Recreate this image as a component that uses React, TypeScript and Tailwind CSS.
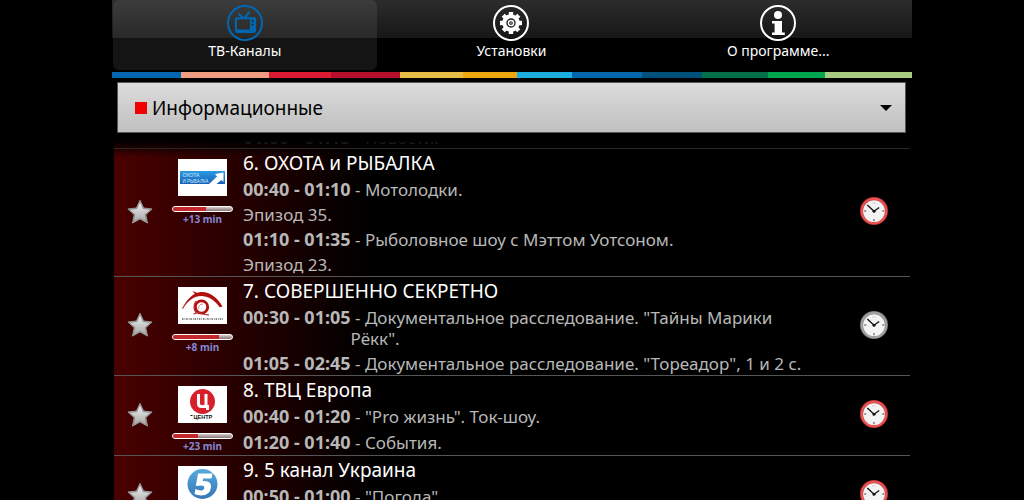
import type { ReactNode } from "react";

type Programme = { time?: string; text: string };
type Channel = {
  title: string;
  logo: ReactNode;
  progress: number;
  left: string;
  alarm: boolean;
  programmes: Programme[];
};

function TvIcon() {
  return (
    <svg viewBox="0 0 36 36" className="size-9" fill="none" stroke="#0068b3" aria-hidden="true">
      <circle cx="18" cy="18" r="17" strokeWidth="2" />
      <path d="M11.5 8.5 16 13M22.5 7 17.5 13" strokeWidth="2" />
      <rect x="8.9" y="13.3" width="19.2" height="13.6" rx="1.2" strokeWidth="2" />
      <path d="M23 13h5.500v14H23z" fill="#0068b3" stroke="none" />
      <path d="M10 25.2h11.500q1.500-.1 1.500-1.500" strokeWidth="1.4" />
      <circle cx="25.600" cy="16" r="1" fill="#202020" stroke="none" />
      <circle cx="25.600" cy="19.500" r="1" fill="#202020" stroke="none" />
    </svg>
  );
}

function GearIcon() {
  const teeth = [0, 45, 90, 135, 180, 225, 270, 315];
  return (
    <svg viewBox="0 0 36 36" className="size-9" fill="none" stroke="#fff" aria-hidden="true">
      <circle cx="18" cy="18" r="17" strokeWidth="2" />
      <circle cx="18" cy="18" r="6.700" strokeWidth="4" />
      {teeth.map((a) => (
        <path key={a} d="M15.800 10.500V7h4.400v3.500z" fill="#fff" stroke="none" transform={`rotate(${a} 18 18)`} />
      ))}
      <circle cx="18" cy="18" r="2.600" strokeWidth="1.500" />
      <circle cx="18" cy="18" r=".7" fill="#fff" stroke="none" />
    </svg>
  );
}

function InfoIcon() {
  return (
    <svg viewBox="0 0 36 36" className="size-9" fill="#fff" aria-hidden="true">
      <circle cx="18" cy="18" r="17" fill="none" stroke="#fff" strokeWidth="2" />
      <circle cx="18" cy="10" r="4" />
      <path d="M12 16h10v11.500h2.800V30H12v-2.500h2.600v-9H12z" />
    </svg>
  );
}

function Star() {
  return (
    <svg viewBox="0 0 26 26" className="size-[26px]" aria-hidden="true">
      <defs>
        <linearGradient id="starFill" x1="0" y1="0" x2="0" y2="1">
          <stop offset="0" stopColor="#f0f0f0" />
          <stop offset="1" stopColor="#a8a8a8" />
        </linearGradient>
      </defs>
      <path
        d="M13 1.300 16.600 9l8.500 1-6.300 5.700 1.700 8.400L13 20l-7.500 4.100 1.700-8.400L.9 10l8.500-1z"
        fill="#8c8c8c"
        stroke="#989898"
        strokeWidth="1"
        strokeLinejoin="round"
      />
      <path d="M13 3.500 15.900 10l7 .8-5.200 4.700 1.400 6.900L13 18.900l-6.100 3.500 1.400-6.900-5.200-4.700 7-.8z" fill="url(#starFill)" />
    </svg>
  );
}

function Clock({ active }: { active: boolean }) {
  return (
    <svg viewBox="0 0 28 28" className="size-7" aria-hidden="true">
      <circle cx="14" cy="14" r="14" fill={active ? "#b93434" : "#777"} />
      <circle cx="14" cy="14" r="13.200" fill={active ? "#ee5454" : "#a3a3a3"} />
      <circle cx="14" cy="14" r="11.300" fill={active ? "#b33" : "#777"} />
      <circle cx="14" cy="14.200" r="10.900" fill="#f3f3f3" />
      <path d="M14 22v2.200M4.200 14h2M22.300 14h2" stroke="#777" strokeWidth="1.400" />
      <path d="M12 6h4" stroke="#ccc" strokeWidth=".8" />
      <path d="M7.300 8 14 14.200l5.200-3.700" fill="none" stroke="#111" strokeWidth="1.400" />
      <circle cx="14" cy="14.200" r="1.500" fill="#111" />
    </svg>
  );
}

function HuntingLogo() {
  return (
    <svg viewBox="0 0 49 37" className="h-[37px] w-[49px] bg-white" role="img" aria-label="Охота и рыбалка">
      <defs>
        <linearGradient id="huntBlue" x1="0" y1="0" x2="0" y2="1">
          <stop offset="0" stopColor="#2a9be2" />
          <stop offset="1" stopColor="#1560b6" />
        </linearGradient>
      </defs>
      <rect x="2" y="12" width="45" height="13" fill="url(#huntBlue)" />
      <path d="m31 25 8-7.500-2-2.500 8.500-1.500V23l-2-2-5 4z" fill="#fff" />
      <text x="4.500" y="18" fontSize="5" fill="#d4eaff" fontFamily="Liberation Sans, sans-serif">ОХОТА</text>
      <text x="4.500" y="23.500" fontSize="4.500" fill="#d4eaff" fontFamily="Liberation Sans, sans-serif">И РЫБАЛКА</text>
    </svg>
  );
}

function SecretLogo() {
  return (
    <svg viewBox="0 0 49 37" className="h-[37px] w-[49px] bg-white" role="img" aria-label="Совершенно секретно">
      <path d="M4 21.500C9 12 15 6 22 5.200c9-1 17 5 22.500 14.300l-2.800.8C36 12.500 30 9 23 9 15 9.500 9.500 14 5 21.800z" fill="#b01010" />
      <path d="m14.500 4 5 2L24 5l-5 4.500z" fill="#b01010" />
      <circle cx="23.500" cy="20" r="6.200" fill="none" stroke="#b01010" strokeWidth="2.800" />
      <path d="M18 14q-4 6 0 12M15.500 27q5-2 8-.5t7.500 1.300" fill="none" stroke="#c03030" strokeWidth="1.200" />
      <path d="M20.500 22q0-5 4.500-5" fill="none" stroke="#d88" strokeWidth="1" />
      <path d="M4 32h41" stroke="#888" strokeWidth="1.800" strokeDasharray="1.500 1 .8 .9" />
    </svg>
  );
}

function CenterLogo() {
  return (
    <svg viewBox="0 0 49 37" className="h-[37px] w-[49px] bg-white" role="img" aria-label="ТВ Центр">
      <circle cx="24.500" cy="15.500" r="12.500" fill="#d8202c" />
      <path d="M20.500 8v9.500q0 3 3 3h5M28 8v12.500h1.500v3.500" fill="none" stroke="#fff" strokeWidth="3" />
      <text x="15.500" y="33.300" fontSize="5.500" fontWeight="bold" fill="#111" fontFamily="Liberation Sans, sans-serif">ЦЕНТР</text>
      <path d="M12.500 29.500h2" stroke="#111" />
    </svg>
  );
}

function FiveLogo() {
  return (
    <svg viewBox="0 0 49 37" className="h-[37px] w-[49px] bg-white" role="img" aria-label="5 канал">
      <defs>
        <linearGradient id="fiveBlue" x1="0" y1="0" x2="0" y2="1">
          <stop offset="0" stopColor="#58a8dc" />
          <stop offset="1" stopColor="#3478b8" />
        </linearGradient>
      </defs>
      <circle cx="24.500" cy="18" r="15" fill="url(#fiveBlue)" />
      <path d="M20 7.500h14.500l-1 5h-8.300l-.5 2.500q8.800-.8 8.300 6-.7 8.500-10 8.500-3.800 0-6.600-1.400l1.100-5q2.800 1.400 5.200 1.400 3.300 0 3.500-2.800.1-2.200-3.200-2.200-2.400 0-5.200.6z" fill="#fff" />
    </svg>
  );
}

const tabs = [
  { label: "ТВ-Каналы", icon: <TvIcon />, active: true },
  { label: "Установки", icon: <GearIcon />, active: false },
  { label: "О программе...", icon: <InfoIcon />, active: false },
];

const stripes = [
  "grow-[69] bg-[#0066b0]",
  "grow-[88] bg-[#f09c80]",
  "grow-[62] bg-[#da1b32]",
  "grow-[69] bg-[#b60f2e]",
  "grow-[63] bg-[#e8bd45]",
  "grow-[54] bg-[#eea70f]",
  "grow-[55] bg-[#1badde]",
  "grow-[70] bg-[#0066ae]",
  "grow-[60] bg-[#00507c]",
  "grow-[66] bg-[#00704b]",
  "grow-[57] bg-[#00a650]",
  "grow-[87] bg-[#a9cb80]",
];

const channels: Channel[] = [
  {
    title: "6. ОХОТА и РЫБАЛКА",
    logo: <HuntingLogo />,
    progress: 56,
    left: "+13 min",
    alarm: true,
    programmes: [
      { time: "00:40 - 01:10", text: "Мотолодки." },
      { text: "Эпизод 35." },
      { time: "01:10 - 01:35", text: "Рыболовное шоу с Мэттом Уотсоном." },
      { text: "Эпизод 23." },
    ],
  },
  {
    title: "7. СОВЕРШЕННО СЕКРЕТНО",
    logo: <SecretLogo />,
    progress: 78,
    left: "+8 min",
    alarm: false,
    programmes: [
      { time: "00:30 - 01:05", text: "Документальное расследование. \"Тайны Марики Рёкк\"." },
      { time: "01:05 - 02:45", text: "Документальное расследование. \"Тореадор\", 1 и 2 с." },
    ],
  },
  {
    title: "8. ТВЦ Европа",
    logo: <CenterLogo />,
    progress: 42,
    left: "+23 min",
    alarm: true,
    programmes: [
      { time: "00:40 - 01:20", text: "\"Pro жизнь\". Ток-шоу." },
      { time: "01:20 - 01:40", text: "События." },
    ],
  },
  {
    title: "9. 5 канал Украина",
    logo: <FiveLogo />,
    progress: 60,
    left: "+4 min",
    alarm: true,
    programmes: [
      { time: "00:50 - 01:00", text: "\"Погода\"." },
    ],
  },
];

function ProgrammeLine({ time, text }: Programme) {
  if (!time) return <p>{text}</p>;
  return (
    <p className="flex items-baseline">
      <b className="shrink-0 text-[18px] whitespace-nowrap">{time}</b>
      <span className="min-w-0 whitespace-pre-wrap">{` - ${text}`}</span>
    </p>
  );
}

function ChannelRow({ channel }: { channel: Channel }) {
  return (
    <li className="flex shrink-0 border-b border-[#555] bg-[linear-gradient(to_right,#4a0000,#000_256px)]">
      <button type="button" aria-label="В избранное" className="flex w-[52px] shrink-0 items-center justify-center pb-0.5">
        <Star />
      </button>
      <div className="flex w-[73px] shrink-0 flex-col items-center pt-2.5 pb-0.5">
        {channel.logo}
        <div
          role="progressbar"
          aria-label="Прошло"
          aria-valuenow={channel.progress}
          className="mt-2.5 h-1.5 w-[61px] overflow-hidden rounded-full border border-white bg-gradient-to-b from-[#d8cccc] to-[#877]"
        >
          <div className="h-full bg-[#c2282c]" style={{ width: `${channel.progress}%` }} />
        </div>
        <p className="text-[10px] leading-[14px] font-bold text-[#8587d2]">{channel.left}</p>
      </div>
      <div className="flex min-w-0 grow flex-col pr-7 pl-1">
        <h2 className="pt-0.5 text-[19px] leading-[25px] text-white">{channel.title}</h2>
        <div className="grid grow text-[17px] leading-[21px] text-[#b8b8b8] *:pt-[3px] *:pb-px">
          {channel.programmes.map((p) => (
            <ProgrammeLine key={(p.time ?? "") + p.text} {...p} />
          ))}
        </div>
      </div>
      <button type="button" aria-label="Напомнить" className="flex w-[72px] shrink-0 items-center justify-center pb-[3px]">
        <Clock active={channel.alarm} />
      </button>
    </li>
  );
}

export default function App() {
  return (
    <div className="h-screen overflow-hidden bg-black font-['Noto_Sans','Open_Sans',sans-serif]">
      <div className="mx-auto flex h-full w-full max-w-[800px] flex-col">
        <nav className="grid shrink-0 grid-cols-3 bg-[linear-gradient(#2c2c2c,#171717_38px,#000_38px)] pb-0.5">
          {tabs.map((tab) => (
            <button
              key={tab.label}
              type="button"
              aria-pressed={tab.active}
              className="mr-0.5 ml-px flex h-[70px] flex-col items-center rounded-md pt-[5px] text-[14px] leading-5 text-white aria-pressed:bg-white/8"
            >
              {tab.icon}
              {tab.label}
            </button>
          ))}
        </nav>
        <div className="flex h-1.5 shrink-0">
          {stripes.map((s) => (
            <span key={s} className={s} />
          ))}
        </div>
        <label className="mr-1.5 ml-[5px] mt-1 flex h-[51px] shrink-0 items-center border border-[#555] bg-gradient-to-b from-[#dcdcdc] to-[#c0c0c0] pr-[13px] pl-[17px]">
          <span className="size-3 bg-[#f00000]" />
          <select aria-label="Категория" className="grow appearance-none bg-transparent pl-[5px] text-[19px] leading-7 text-black">
            <option>Информационные</option>
          </select>
          <svg viewBox="0 0 12 6" className="h-1.5 w-3" aria-hidden="true">
            <path d="M0 0h12L6 6z" />
          </svg>
        </label>
        <ul className="relative mx-0.5 mt-1 flex min-h-0 grow flex-col overflow-hidden">
          <li className="flex h-3 shrink-0 flex-col justify-end overflow-hidden border-b border-[#555] bg-[linear-gradient(to_right,#4a0000,#000_256px)] pl-[129px] text-[17px] leading-[21px] text-[#b4b4b4]">
            <ProgrammeLine time="01:00 - 01:15" text="Новости." />
          </li>
          {channels.map((c) => (
            <ChannelRow key={c.title} channel={c} />
          ))}
          <li aria-hidden="true" className="pointer-events-none absolute inset-x-0 top-0 h-5 bg-gradient-to-b from-black from-20% to-transparent" />
        </ul>
      </div>
    </div>
  );
}
